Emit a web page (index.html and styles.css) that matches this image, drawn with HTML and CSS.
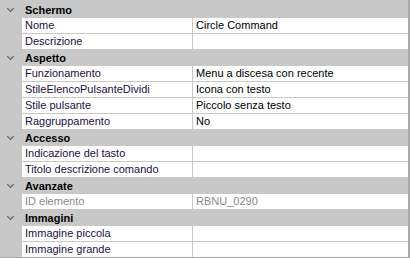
FILE: index.html
```html
<!DOCTYPE html>
<html lang="en">
<head>
    <meta charset="UTF-8">
    <meta name="viewport" content="width=device-width, initial-scale=1.0">
    <title>Proprietà comando</title>
    <link rel="stylesheet" href="styles.css">
</head>
<body>
    <div class="grid">
        <!-- Schermo -->
        <div class="cat"><span class="chev"></span><span class="cat-title">Schermo</span></div>
        <div class="row"><span class="name">Nome</span><span class="value">Circle Command</span></div>
        <div class="row"><span class="name">Descrizione</span><span class="value"></span></div>

        <!-- Aspetto -->
        <div class="cat"><span class="chev"></span><span class="cat-title">Aspetto</span></div>
        <div class="row"><span class="name">Funzionamento</span><span class="value">Menu a discesa con recente</span></div>
        <div class="row"><span class="name">StileElencoPulsanteDividi</span><span class="value">Icona con testo</span></div>
        <div class="row"><span class="name">Stile pulsante</span><span class="value">Piccolo senza testo</span></div>
        <div class="row"><span class="name">Raggruppamento</span><span class="value">No</span></div>

        <!-- Accesso -->
        <div class="cat"><span class="chev"></span><span class="cat-title">Accesso</span></div>
        <div class="row"><span class="name">Indicazione del tasto</span><span class="value"></span></div>
        <div class="row"><span class="name">Titolo descrizione comando</span><span class="value"></span></div>

        <!-- Avanzate -->
        <div class="cat"><span class="chev"></span><span class="cat-title">Avanzate</span></div>
        <div class="row disabled"><span class="name">ID elemento</span><span class="value">RBNU_0290</span></div>

        <!-- Immagini -->
        <div class="cat"><span class="chev"></span><span class="cat-title">Immagini</span></div>
        <div class="row"><span class="name">Immagine piccola</span><span class="value"></span></div>
        <div class="row last"><span class="name">Immagine grande</span><span class="value"></span></div>
    </div>
</body>
</html>
```

FILE: styles.css
```css
/* Basic Reset */
body {
    margin: 0;
    padding: 0;
    background-color: #fff;
    font-family: "Liberation Sans", Arial, sans-serif;
    font-size: 11px;
}

/* Property grid frame */
.grid {
    width: 410px;
    height: 258px;
    box-sizing: border-box;
    padding-top: 2px;
    border-right: 2px solid #a8a8a8;
    border-bottom: 1px solid #a8a8a8;
    background-color: #c8c8c8;
    display: flex;
    flex-direction: column;
}

/* Category header */
.cat {
    height: 16px;
    flex-shrink: 0;
    display: flex;
    align-items: center;
    background-color: #c8c8c8;
}

.chev {
    width: 22px;
    height: 16px;
    position: relative;
}

.chev::before {
    content: "";
    position: absolute;
    left: 8px;
    top: 4px;
    width: 4px;
    height: 4px;
    border-right: 1.5px solid #555;
    border-bottom: 1.5px solid #555;
    transform: rotate(45deg);
}

.cat-title {
    padding-left: 3px;
    font-weight: bold;
    color: #000;
}

/* Property row */
.row {
    height: 16px;
    flex-shrink: 0;
    box-sizing: border-box;
    display: flex;
    padding-left: 22px;
    border-bottom: 1px solid #c8c8c8;
}

.row.last {
    height: 15px;
    border-bottom: none;
}

.name,
.value {
    background-color: #fff;
    line-height: 15px;
    white-space: nowrap;
    overflow: hidden;
}

.name {
    width: 171px;
    padding-left: 3px;
    box-sizing: border-box;
    border-right: 1px solid #c8c8c8;
    color: #1c1040;
}

.value {
    flex: 1;
    padding-left: 3px;
    color: #000;
}

.disabled .name,
.disabled .value {
    color: #8a8a8a;
}
```
